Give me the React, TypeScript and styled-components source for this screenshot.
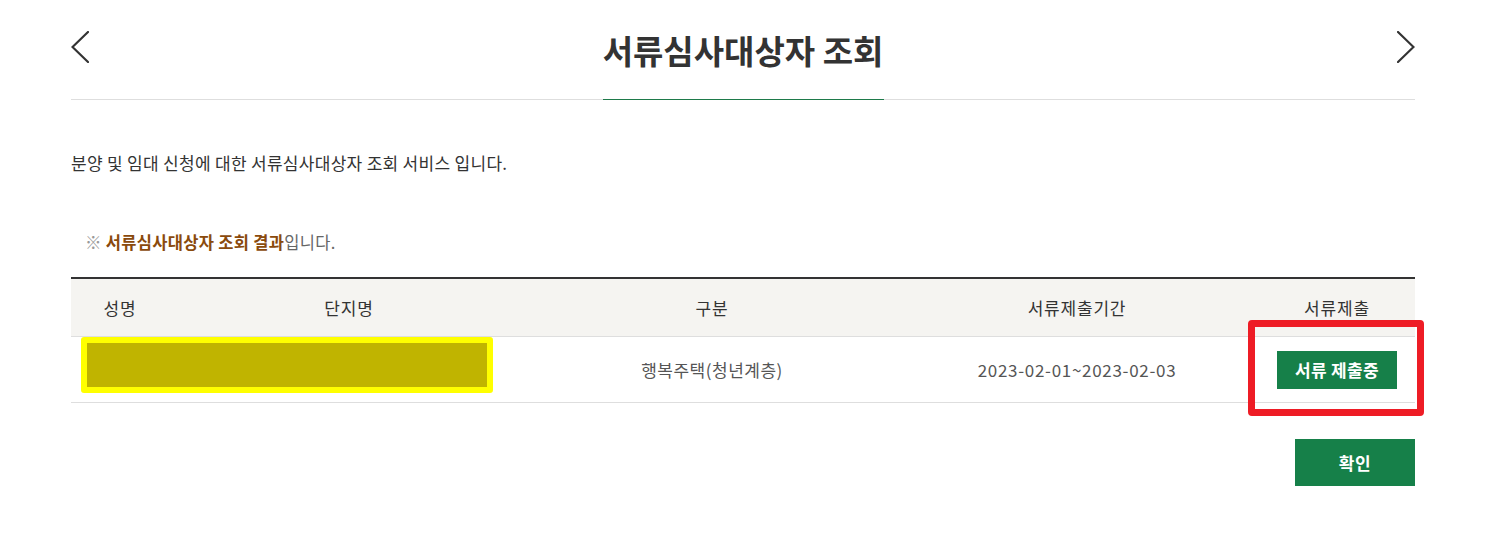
import React from "react";
import styled, { createGlobalStyle } from "styled-components";

const GlobalStyle = createGlobalStyle`
  html, body { margin: 0; padding: 0; background: #fff; }
  body {
    font-family: "Noto Sans CJK KR", "Noto Sans", "Liberation Sans", sans-serif;
    color: #333;
  }
  * { box-sizing: border-box; }
`;

const Page = styled.div`
  width: 1344px;
  margin: 0 auto;
`;

const Header = styled.header`
  height: 100px;
  border-bottom: 1px solid #dedede;
  display: flex;
  align-items: center;
  justify-content: space-between;
`;

const NavButton = styled.button`
  width: 18px;
  height: 32px;
  padding: 0;
  border: 0;
  background: none;
  display: flex;
  margin-bottom: 5px;
  cursor: pointer;
  color: #333;
`;

const Title = styled.h1`
  margin: 0 0 -1px;
  height: 100px;
  width: 281px;
  display: flex;
  align-items: center;
  justify-content: center;
  border-bottom: 1px solid #1e7a4a;
  font-size: 33px;
  font-weight: 700;
  letter-spacing: 0;
  color: #333;
  white-space: nowrap;
`;

const Description = styled.p`
  margin: 51px 0 0;
  font-size: 17px;
  line-height: 24px;
  color: #333;
  letter-spacing: 0.3px;
`;

const Notice = styled.p`
  margin: 55px 0 0;
  padding-left: 14px;
  font-size: 16.5px;
  line-height: 24px;
  letter-spacing: 0.3px;
  color: #666;
`;

const Mark = styled.span`
  color: #999;
  margin-right: 4px;
`;

const Strong = styled.strong`
  color: #8a4a0c;
  font-weight: 700;
`;

const Table = styled.div`
  margin-top: 23px;
  border-top: 2px solid #333;
`;

const Row = styled.div<{ $head?: boolean }>`
  position: relative;
  display: grid;
  grid-template-columns: 98px 360px 366px 364px 156px;
  align-items: center;
  height: ${(p) => (p.$head ? "58px" : "66px")};
  border-bottom: 1px solid #dedede;
  background: ${(p) => (p.$head ? "#f5f4f1" : "#fff")};
`;

const Cell = styled.div<{ $head?: boolean; $spacing?: number }>`
  text-align: center;
  font-size: 17px;
  letter-spacing: ${(p) => (p.$spacing ?? 0.2)}px;
  color: ${(p) => (p.$head ? "#333" : "#555")};
  display: flex;
  justify-content: center;
  align-items: center;
  white-space: nowrap;
`;

const SmallButton = styled.button`
  width: 120px;
  height: 38px;
  border: 0;
  padding: 0;
  background: #168049;
  color: #fff;
  font-family: inherit;
  font-size: 17px;
  letter-spacing: 0.3px;
  font-weight: 700;
  cursor: pointer;
`;

const Redaction = styled.div`
  position: absolute;
  left: 10px;
  top: 0;
  width: 412px;
  height: 56px;
  border: 6px solid #ffff00;
  border-radius: 3px;
  background: #c0b400;
`;

const Highlight = styled.div`
  position: absolute;
  left: 1177px;
  top: -17px;
  width: 176px;
  height: 96px;
  border: 7px solid #ee1c25;
  border-radius: 4px;
  pointer-events: none;
`;

const Footer = styled.div`
  display: flex;
  justify-content: flex-end;
  margin-top: 36px;
`;

const ConfirmButton = styled.button`
  width: 120px;
  height: 47px;
  border: 0;
  padding: 0;
  background: #168049;
  color: #fff;
  font-family: inherit;
  font-size: 17px;
  letter-spacing: 0.5px;
  font-weight: 700;
  cursor: pointer;
`;

const Chevron = ({ dir }: { dir: "left" | "right" }) => (
  <svg width="18" height="32" viewBox="0 0 18 32" fill="none">
    <polyline
      points={dir === "left" ? "17,1 1.5,16 17,31" : "1,1 16.5,16 1,31"}
      stroke="currentColor"
      strokeWidth="2.2"
      strokeLinecap="round"
      strokeLinejoin="miter"
    />
  </svg>
);

const headers = ["성명", "단지명", "구분", "서류제출기간", "서류제출"];

export default function App() {
  return (
    <>
      <GlobalStyle />
      <Page>
        <Header>
          <NavButton aria-label="이전">
            <Chevron dir="left" />
          </NavButton>
          <Title>서류심사대상자 조회</Title>
          <NavButton aria-label="다음">
            <Chevron dir="right" />
          </NavButton>
        </Header>

        <Description>분양 및 임대 신청에 대한 서류심사대상자 조회 서비스 입니다.</Description>

        <Notice>
          <Mark>※</Mark>
          <Strong>서류심사대상자 조회 결과</Strong>입니다.
        </Notice>

        <Table>
          <Row $head>
            {headers.map((h) => (
              <Cell $head key={h} $spacing={0.8}>
                {h}
              </Cell>
            ))}
          </Row>
          <Row>
            <Cell />
            <Cell />
            <Cell $spacing={0.5}>행복주택(청년계층)</Cell>
            <Cell $spacing={0.7}>2023-02-01~2023-02-03</Cell>
            <Cell>
              <SmallButton>서류 제출중</SmallButton>
            </Cell>
            <Redaction />
            <Highlight />
          </Row>
        </Table>

        <Footer>
          <ConfirmButton>확인</ConfirmButton>
        </Footer>
      </Page>
    </>
  );
}
